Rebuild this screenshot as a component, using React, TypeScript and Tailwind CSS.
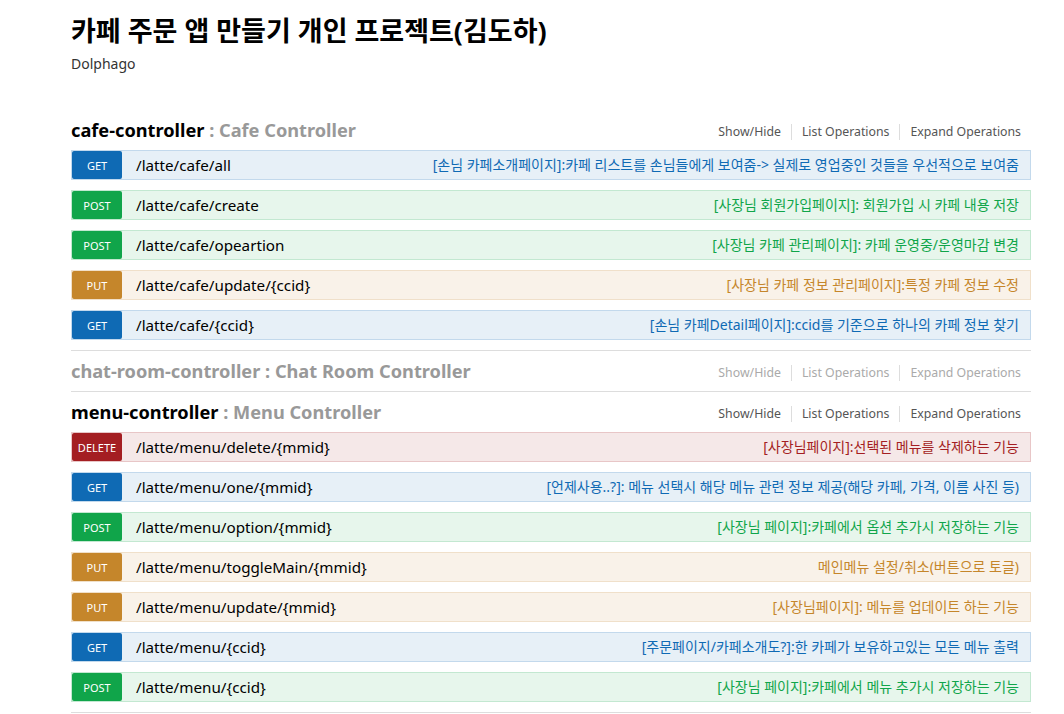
import React from "react";

type Method = "GET" | "POST" | "PUT" | "DELETE";

const styles: Record<Method, { row: string; badge: string; desc: string }> = {
  GET: { row: "bg-[#e7f0f7] border-[#c3d9ec]", badge: "bg-[#0f6ab4]", desc: "text-[#0f6ab4]" },
  POST: { row: "bg-[#e7f6ec] border-[#c3e8d1]", badge: "bg-[#10a54a]", desc: "text-[#10a54a]" },
  PUT: { row: "bg-[#f9f2e9] border-[#f0e0ca]", badge: "bg-[#c5862b]", desc: "text-[#c5862b]" },
  DELETE: { row: "bg-[#f5e8e8] border-[#e8c6c7]", badge: "bg-[#a41e22]", desc: "text-[#a41e22]" },
};

type Op = { method: Method; path: string; desc: string };

const cafeOps: Op[] = [
  { method: "GET", path: "/latte/cafe/all", desc: "[손님 카페소개페이지]:카페 리스트를 손님들에게 보여줌-> 실제로 영업중인 것들을 우선적으로 보여줌" },
  { method: "POST", path: "/latte/cafe/create", desc: "[사장님 회원가입페이지]: 회원가입 시 카페 내용 저장" },
  { method: "POST", path: "/latte/cafe/opeartion", desc: "[사장님 카페 관리페이지]: 카페 운영중/운영마감 변경" },
  { method: "PUT", path: "/latte/cafe/update/{ccid}", desc: "[사장님 카페 정보 관리페이지]:특정 카페 정보 수정" },
  { method: "GET", path: "/latte/cafe/{ccid}", desc: "[손님 카페Detail페이지]:ccid를 기준으로 하나의 카페 정보 찾기" },
];

const menuOps: Op[] = [
  { method: "DELETE", path: "/latte/menu/delete/{mmid}", desc: "[사장님페이지]:선택된 메뉴를 삭제하는 기능" },
  { method: "GET", path: "/latte/menu/one/{mmid}", desc: "[언제사용..?]: 메뉴 선택시 해당 메뉴 관련 정보 제공(해당 카페, 가격, 이름 사진 등)" },
  { method: "POST", path: "/latte/menu/option/{mmid}", desc: "[사장님 페이지]:카페에서 옵션 추가시 저장하는 기능" },
  { method: "PUT", path: "/latte/menu/toggleMain/{mmid}", desc: "메인메뉴 설정/취소(버튼으로 토글)" },
  { method: "PUT", path: "/latte/menu/update/{mmid}", desc: "[사장님페이지]: 메뉴를 업데이트 하는 기능" },
  { method: "GET", path: "/latte/menu/{ccid}", desc: "[주문페이지/카페소개도?]:한 카페가 보유하고있는 모든 메뉴 출력" },
  { method: "POST", path: "/latte/menu/{ccid}", desc: "[사장님 페이지]:카페에서 메뉴 추가시 저장하는 기능" },
];

function Row({ op }: { op: Op }) {
  const s = styles[op.method];
  return (
    <div className={`mb-[10px] flex h-[30px] items-center border ${s.row}`}>
      <span
        className={`flex h-[28px] w-[50px] shrink-0 items-center justify-center rounded-[2px] pt-[2px] text-[11px] text-white ${s.badge}`}
      >
        {op.method}
      </span>
      <span className="pl-[14px] text-[15.2px] leading-[20px] text-black">{op.path}</span>
      <span className={`ml-auto pr-[11px] text-[14px] leading-[18px] ${s.desc}`}>{op.desc}</span>
    </div>
  );
}

function Heading({ name, desc, muted }: { name: string; desc: string; muted?: boolean }) {
  const link = muted ? "text-[#aaa]" : "text-[#555]";
  return (
    <div className="flex h-[40px] items-center">
      <h2 className={`text-[18.2px] font-bold leading-[22px] ${muted ? "text-[#999]" : "text-black"}`}>
        {name}
        <span className="text-[#999]"> : {desc}</span>
      </h2>
      <ul className={`ml-auto flex items-center pt-[4px] text-[12.3px] ${link}`}>
        <li className="border-r border-[#ddd] px-[10px] leading-[16px]">Show/Hide</li>
        <li className="border-r border-[#ddd] px-[10px] leading-[16px]">List Operations</li>
        <li className="px-[10px] leading-[16px]">Expand Operations</li>
      </ul>
    </div>
  );
}

export default function App() {
  return (
    <div
      className="min-h-[714px] bg-white"
      style={{ fontFamily: '"Noto Sans", "Noto Sans CJK KR", sans-serif' }}
    >
      <div className="ml-[71px] w-[960px] pt-[16px]">
        <h1 className="text-[27px] font-bold leading-[30px] text-black">카페 주문 앱 만들기 개인 프로젝트(김도하)</h1>
        <div className="mt-[8px] text-[14px] leading-[20px] text-[#333]">Dolphago</div>
        <div className="mt-[36px]">
          <section className="border-b border-[#ddd]">
            <Heading name="cafe-controller" desc="Cafe Controller" />
            {cafeOps.map((op, i) => (
              <Row key={i} op={op} />
            ))}
          </section>
          <section className="border-b border-[#ddd]">
            <Heading name="chat-room-controller" desc="Chat Room Controller" muted />
          </section>
          <section className="border-b border-[#ddd]">
            <Heading name="menu-controller" desc="Menu Controller" />
            {menuOps.map((op, i) => (
              <Row key={i} op={op} />
            ))}
          </section>
        </div>
      </div>
    </div>
  );
}
